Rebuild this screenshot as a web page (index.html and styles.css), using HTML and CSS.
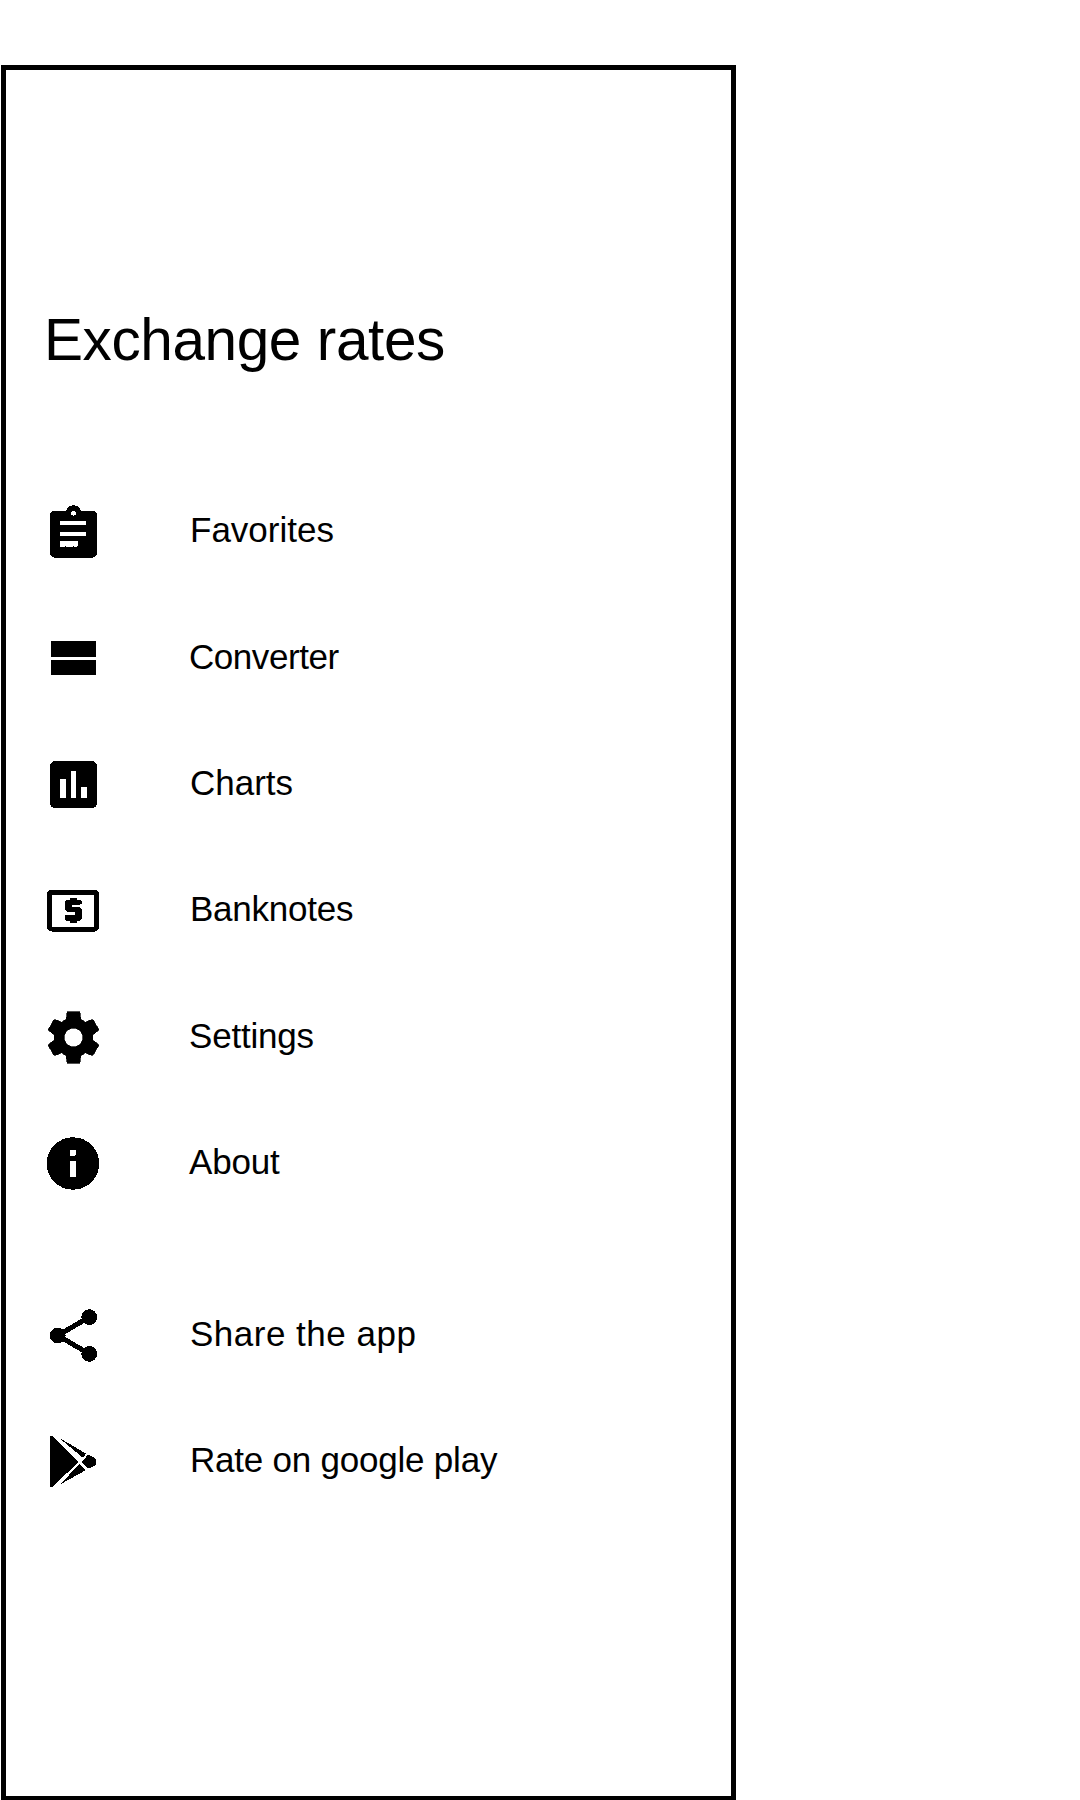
FILE: index.html
```html
<!DOCTYPE html>
<html lang="en">
<head>
<meta charset="utf-8">
<title>Exchange rates</title>
<link rel="stylesheet" href="styles.css">
</head>
<body>
<aside class="drawer">
  <h1 class="title">Exchange rates</h1>
  <nav class="menu">
    <a class="item"><svg class="icon" viewBox="0 -1 24 24"><path d="M19 3h-4.180C14.400 1.840 13.300 1 12 1s-2.400.84-2.820 2H5c-1.100 0-2 .9-2 2v14c0 1.100.9 2 2 2h14c1.100 0 2-.9 2-2V5c0-1.100-.9-2-2-2zm-7 0c.55 0 1 .45 1 1s-.45 1-1 1-1-.45-1-1 .45-1 1-1zm1.800 13.500l-1 .4-.8-.3-1 .4-2-.3-2 .3V14.800h6.800v1.700zm3.100-3.700H7V11h9.900v1.800zm0-4.100H7V6.900h9.900v1.800z"/></svg><span class="label">Favorites</span></a>
    <a class="item"><svg class="icon" viewBox="0 0 63 63"><path d="M9 14h45v16H9zM9 33h45v15H9z"/></svg><span class="label converter">Converter</span></a>
    <a class="item"><svg class="icon" viewBox="0 0 24 24"><path d="M19 3H5c-1.100 0-2 .9-2 2v14c0 1.100.9 2 2 2h14c1.100 0 2-.9 2-2V5c0-1.100-.9-2-2-2zM9 17H7v-7h2v7zm4 0h-2V7h2v10zm4 0h-2v-4h2v4z"/></svg><span class="label">Charts</span></a>
    <a class="item"><svg class="icon" viewBox="35.500 28.500 189 189"><rect x="58.500" y="67.500" width="141" height="111" rx="6" fill="none" stroke="#000" stroke-width="15"/><path d="M120 84h19v6h11l4 4v8l-4 3h-26v8h24l6 6v29l-6 6h-9v7h-19v-7h-11l-4-4v-11l4-4h26v-7h-23l-7-6V97l7-7h8z"/></svg><span class="label banknotes">Banknotes</span></a>
    <a class="item"><svg class="icon" viewBox="0.300 0.300 23.400 23.400"><path d="M19.140 12.940c.04-.3.060-.61.060-.94 0-.32-.02-.64-.07-.94l2.030-1.580c.18-.14.230-.41.120-.61l-1.920-3.320c-.12-.22-.37-.29-.59-.22l-2.390.96c-.5-.38-1.030-.7-1.620-.94L14.400 2.810c-.04-.24-.24-.41-.48-.41h-3.840c-.24 0-.43.17-.47.41L9.250 5.350C8.660 5.590 8.120 5.920 7.630 6.290L5.240 5.330c-.22-.08-.47 0-.59.22L2.740 8.870c-.12.210-.08.470.120.610l2.030 1.580c-.05.3-.09.63-.09.94s.02.640.070.940l-2.030 1.580c-.18.140-.23.410-.12.610l1.920 3.320c.12.220.37.290.59.220l2.390-.96c.5.380 1.030.7 1.620.94l.36 2.540c.05.240.24.410.48.410h3.840c.24 0 .44-.17.470-.41l.36-2.540c.59-.24 1.130-.56 1.620-.94l2.390.96c.22.080.47 0 .59-.22l1.920-3.320c.12-.22.070-.47-.12-.61l-2.010-1.580zM12 15.500a3.500 3.500 0 1 1 0-7 3.500 3.500 0 0 1 0 7z" stroke="#000" stroke-width=".25"/></svg><span class="label settings">Settings</span></a>
    <a class="item"><svg class="icon" viewBox="0.200 0 24 24"><path d="M12 2C6.480 2 2 6.480 2 12s4.480 10 10 10 10-4.480 10-10S17.520 2 12 2zm1 15h-2v-6h2v6zm0-8.200l-.4.300H11V7h2v1.800z"/></svg><span class="label about">About</span></a>
    <a class="item spaced"><svg class="icon" viewBox="0 0 24 24"><path d="M6 12l12-7M6 12l12 7" stroke="#000" stroke-width="1.900"/><circle cx="18" cy="5" r="3"/><circle cx="6" cy="12" r="3"/><circle cx="18" cy="19" r="3"/></svg><span class="label share">Share the app</span></a>
    <a class="item"><svg class="icon" viewBox="35.500 30 189 189"><path d="M60 48h8l76 78-76 75h-8zM86 53l82 48-10 12zM174 104l20 10q9 12 0 23l-20 9-20-20zM149 132l17 19-79 44z"/></svg><span class="label rate">Rate on google play</span></a>
  </nav>
</aside>
</body>
</html>
```
FILE: styles.css
```css
* { box-sizing: border-box; }
body {
  margin: 0;
  padding: 65px 0 0 1px;
  background: #fff;
  color: #000;
  font-family: "Liberation Sans", Arial, sans-serif;
}
.drawer {
  width: 735px;
  height: 1735px;
  border: 5px solid #000;
  border-bottom-width: 4px;
  padding-left: 36px;
}
.title {
  margin: 0;
  padding: 232px 0 0 2px;
  height: 398.500px;
  font-size: 58.500px;
  line-height: 76px;
  font-weight: 400;
  letter-spacing: -0.400px;
}
.menu { display: flex; flex-direction: column; }
.item {
  display: flex;
  align-items: center;
  gap: 85px;
  height: 126.400px;
}
.spaced { margin-top: 45px; }
.icon {
  width: 63px;
  height: 63px;
  flex: none;
  shape-rendering: crispEdges;
}
.label {
  padding-bottom: 3px;
  font-size: 35px;
  line-height: 40px;
  white-space: nowrap;
}
.converter { margin-left: -1px; letter-spacing: -0.450px; }
.banknotes { letter-spacing: -0.250px; }
.settings { margin-left: -1px; letter-spacing: -0.200px; }
.about { margin-left: -1px; letter-spacing: -0.200px; }
.share { letter-spacing: 0.500px; }
.rate { letter-spacing: -0.220px; }
```
